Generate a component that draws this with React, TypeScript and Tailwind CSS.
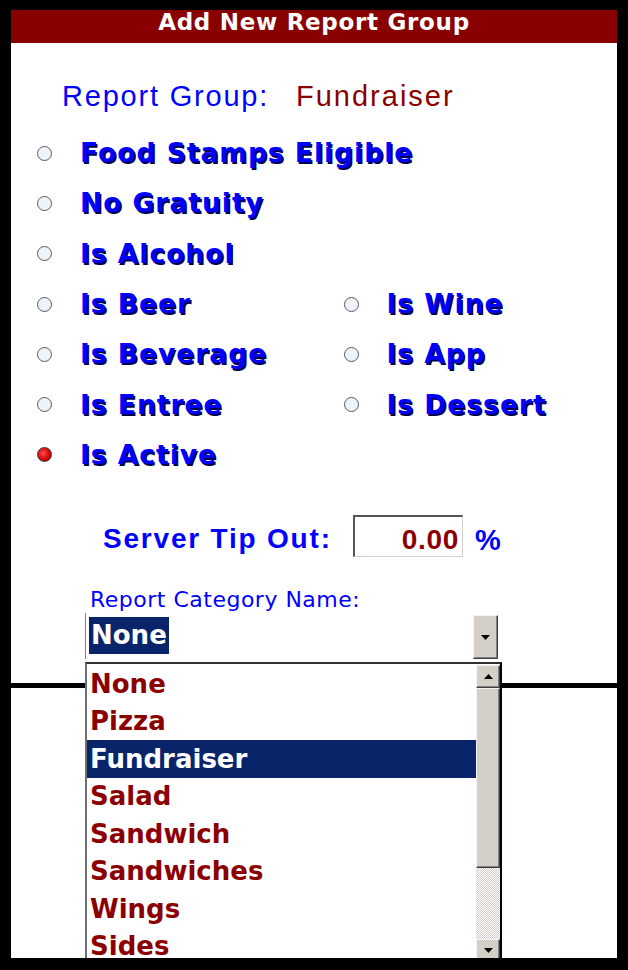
import React from "react";

const F = "font-['Liberation_Sans',Arial,sans-serif]";
const DJ = "font-['DejaVu_Sans',Verdana,sans-serif]";

function Radio({ label, checked }: { label: string; checked?: boolean }) {
  return (
    <div className="flex items-center h-[50.3px]">
      <span
        className={
          checked
            ? "w-[15px] h-[15px] rounded-full border-[1.5px] border-[#3a3a3a] bg-[radial-gradient(circle_at_40%_40%,#ff4a4a,#d00000_60%,#900000)] shrink-0"
            : "w-[15px] h-[15px] rounded-full border-[1.5px] border-[#5a5a5a] bg-[#eef3fa] shrink-0"
        }
      />
      <span
        className={
          "ml-[28px] text-[26.5px] leading-[32px] font-bold tracking-[1px] text-[#0000ff] whitespace-nowrap [text-shadow:1.5px_1.5px_0_#000050] " +
          DJ
        }
      >
        {label}
      </span>
    </div>
  );
}

function Btn3D({ children, className }: { children?: React.ReactNode; className?: string }) {
  return (
    <div
      className={
        "bg-[#d4d0c8] border border-t-[#f4f4f4] border-l-[#f4f4f4] border-r-[#404040] border-b-[#404040] shadow-[inset_-1px_-1px_0_#808080] flex items-center justify-center " +
        (className ?? "")
      }
    >
      {children}
    </div>
  );
}

function DownTri() {
  return (
    <svg width="9" height="5" viewBox="0 0 9 5">
      <path d="M0 0 H9 L4.5 5 Z" fill="#000" />
    </svg>
  );
}
function UpTri() {
  return (
    <svg width="9" height="5" viewBox="0 0 9 5">
      <path d="M0 5 H9 L4.5 0 Z" fill="#000" />
    </svg>
  );
}

const items = ["None", "Pizza", "Fundraiser", "Salad", "Sandwich", "Sandwiches", "Wings", "Sides"];

export default function App() {
  return (
    <div className={"w-[628px] h-[970px] bg-black pt-[10px] pl-[11px] pr-[11px] pb-[12px] " + F}>
      <div className="h-full bg-white flex flex-col overflow-hidden relative">
        {/* header */}
        <div className="h-[33px] bg-[#880000] flex justify-center shrink-0">
          <span className={"text-white font-bold text-[23px] leading-[25px] tracking-[0.7px] " + DJ}>
            Add New Report Group
          </span>
        </div>

        {/* upper panel */}
        <div className="h-[640px] shrink-0 flex flex-col">
          <div className="mt-[36px] h-[34px] flex items-center pl-[51px]">
            <span className="w-[234px] text-[29px] leading-[34px] tracking-[1.8px] text-[#0000ff]">Report Group:</span>
            <span className="text-[29px] leading-[34px] tracking-[2px] text-[#8b0000]">Fundraiser</span>
          </div>

          <div className="mt-[15px] pl-[26px] grid grid-cols-[306.5px_auto]">
            <Radio label="Food Stamps Eligible" />
            <div />
            <Radio label="No Gratuity" />
            <div />
            <Radio label="Is Alcohol" />
            <div />
            <Radio label="Is Beer" />
            <Radio label="Is Wine" />
            <Radio label="Is Beverage" />
            <Radio label="Is App" />
            <Radio label="Is Entree" />
            <Radio label="Is Dessert" />
            <Radio label="Is Active" checked />
            <div />
          </div>

          <div className="mt-[35px] h-[42px] flex items-center pl-[92px]">
            <span className="w-[250px] mt-[6px] text-[28px] leading-[32px] font-bold tracking-[1.8px] text-[#0000ff]">
              Server Tip Out:
            </span>
            <div className="w-[110px] h-[42px] border-t-2 border-l-2 border-t-[#555] border-l-[#555] border-r border-b border-r-[#d4d0c8] border-b-[#d4d0c8] flex items-center justify-end pr-[3px] pt-[7px]">
              <span className="text-[28px] leading-[30px] font-bold tracking-[0.7px] text-[#8b0000]">0.00</span>
            </div>
            <span className="ml-[12px] mt-[8px] text-[29px] leading-[32px] font-bold text-[#0000ff]">%</span>
          </div>

          <div className={"mt-[31px] pl-[79px] text-[22px] leading-[24px] tracking-[0.5px] text-[#0000ff] " + DJ}>
            Report Category Name:
          </div>

          <div className="mt-[1px] ml-[74px] w-[413px] h-[46px] relative flex">
            <div className="flex-1 border-l border-l-[#808080] pt-[4px] pl-[3px]">
              <span
                className={
                  "inline-block h-[37px] bg-[#0a246a] px-[2px] text-white font-bold text-[26px] leading-[37px] " + DJ
                }
              >
                None
              </span>
            </div>
            <div className="pt-[2px]">
              <Btn3D className="w-[25px] h-[44px]">
                <DownTri />
              </Btn3D>
            </div>

            {/* dropdown list */}
            <div className="absolute left-0 top-[49px] w-[417px] h-[320px] bg-white border-t-2 border-t-[#303030] border-l-2 border-l-[#707070] border-r-2 border-r-black flex z-10">
              <div className="flex-1 pt-[1px]">
                {items.map((it) => (
                  <div
                    key={it}
                    className={
                      "h-[37.5px] pl-[3px] flex items-center text-[26px] leading-[32px] font-bold " +
                      DJ +
                      " " +
                      (it === "Fundraiser" ? "bg-[#0a246a] text-white" : "text-[#8b0000]")
                    }
                  >
                    {it}
                  </div>
                ))}
              </div>
              <div className="w-[24px] pt-[1px] flex flex-col">
                <Btn3D className="h-[23px] w-full">
                  <UpTri />
                </Btn3D>
                <Btn3D className="h-[180px] w-full" />
                <div className="h-[71px] w-full bg-[repeating-conic-gradient(#d4d0c8_0%_25%,#ffffff_0%_50%)] bg-[length:2px_2px]" />
                <Btn3D className="h-[23px] w-full">
                  <DownTri />
                </Btn3D>
              </div>
            </div>
          </div>
        </div>

        {/* separator line */}
        <div className="h-[5px] bg-black shrink-0" />
        <div className="flex-1 bg-white" />
      </div>
    </div>
  );
}
